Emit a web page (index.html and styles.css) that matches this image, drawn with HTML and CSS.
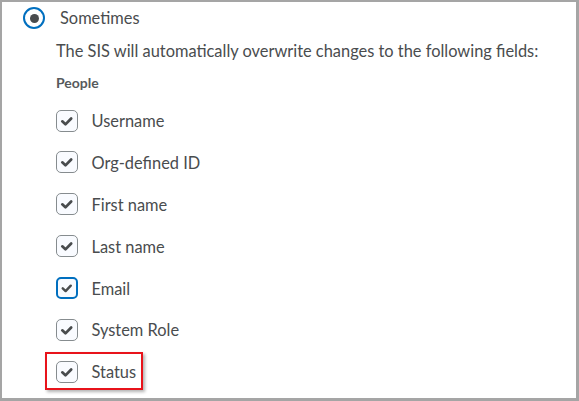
FILE: index.html
```html
<!DOCTYPE html>
<html>
<head>
<meta charset="utf-8">
<link rel="stylesheet" href="styles.css">
</head>
<body>
<div class="frame">
  <div class="radio-row">
    <span class="radio"><span class="dot"></span></span>
    <span class="radio-label">Sometimes</span>
  </div>
  <div class="details">
    <p class="intro">The SIS will automatically overwrite changes to the following fields:</p>
    <h3 class="group">People</h3>
    <ul class="fields">
      <li class="field"><span class="box"><svg viewBox="0 0 22 22"><path d="M5.8 11.4 L9.3 14.7 L15.6 8.2"/></svg></span><span>Username</span></li>
      <li class="field"><span class="box"><svg viewBox="0 0 22 22"><path d="M5.8 11.4 L9.3 14.7 L15.6 8.2"/></svg></span><span>Org-defined ID</span></li>
      <li class="field"><span class="box"><svg viewBox="0 0 22 22"><path d="M5.8 11.4 L9.3 14.7 L15.6 8.2"/></svg></span><span>First name</span></li>
      <li class="field"><span class="box"><svg viewBox="0 0 22 22"><path d="M5.8 11.4 L9.3 14.7 L15.6 8.2"/></svg></span><span>Last name</span></li>
      <li class="field"><span class="box focus"><svg viewBox="0 0 22 22"><path d="M5.8 11.4 L9.3 14.7 L15.6 8.2"/></svg></span><span>Email</span></li>
      <li class="field"><span class="box"><svg viewBox="0 0 22 22"><path d="M5.8 11.4 L9.3 14.7 L15.6 8.2"/></svg></span><span>System Role</span></li>
      <li class="field"><span class="box"><svg viewBox="0 0 22 22"><path d="M5.8 11.4 L9.3 14.7 L15.6 8.2"/></svg></span><span>Status</span><span class="callout"></span></li>
    </ul>
  </div>
</div>
</body>
</html>
```

FILE: styles.css
```css
* { box-sizing: border-box; }
html, body { margin: 0; padding: 0; background: #fff; }
body { font-family: Lato, "Noto Sans", sans-serif; color: #494c4e; }

.frame {
  width: 579px;
  height: 401px;
  border-style: solid;
  border-color: #a5a5a5;
  border-width: 2px 3px 3px 2px;
  overflow: hidden;
  background: #fff;
}

.radio-row {
  display: flex;
  align-items: center;
  gap: 15px;
  margin: 5px 0 0 21px;
  height: 22px;
}
.radio {
  width: 22px;
  height: 22px;
  border: 2px solid #006fbf;
  border-radius: 50%;
  display: flex;
  align-items: center;
  justify-content: center;
  background: #fff;
}
.dot {
  width: 9px;
  height: 9px;
  border-radius: 50%;
  background: #494c4e;
}
.radio-label { font-size: 16.4px; line-height: 22px; }

.details { padding-left: 54px; }
.intro {
  margin: 11px 0 0;
  font-size: 16.4px;
  line-height: 22px;
}
.group {
  margin: 11px 0 0;
  font-size: 14px;
  font-weight: 700;
  line-height: 20px;
  color: #565a5c;
}

.fields { list-style: none; margin: 16.5px 0 0; padding: 0; display: flex; flex-direction: column; gap: 19.9px; }
.field {
  position: relative;
  display: flex;
  align-items: center;
  gap: 14px;
  height: 22px;
  font-size: 16.4px;
}
.box {
  width: 22px;
  height: 22px;
  border: 1px solid #868c8f;
  border-radius: 5px;
  background: #f9fbff;
  display: flex;
  margin-left: -0.5px;
}
.box svg { width: 20px; height: 20px; }
.box path { fill: none; stroke: #494c4e; stroke-width: 3; stroke-linecap: round; stroke-linejoin: round; }
.box.focus { border: 2px solid #006fbf; }
.box.focus svg { width: 18px; height: 18px; }

.callout {
  position: absolute;
  left: -11px;
  top: -9px;
  width: 97.5px;
  height: 38px;
  border: 2px solid #e8131b;
  box-shadow: 2px 2px 3px rgba(0,0,0,0.3);
}
```
